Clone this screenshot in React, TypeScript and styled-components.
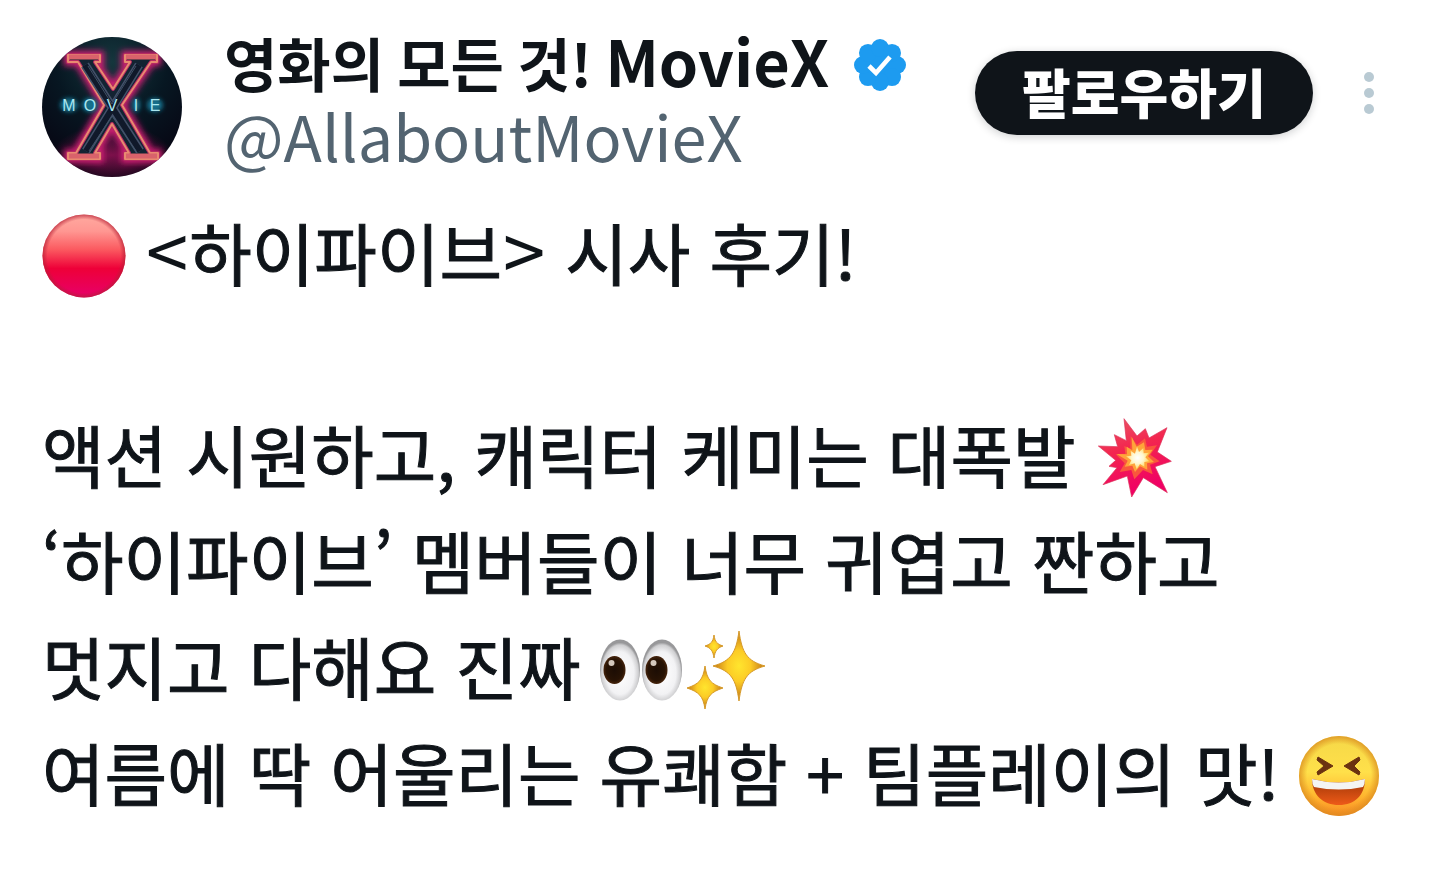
import React from "react";
import styled, { createGlobalStyle } from "styled-components";

const GlobalStyle = createGlobalStyle`
  *, *::before, *::after { box-sizing: border-box; }
  body {
    margin: 0;
    background: #ffffff;
    color: #0f1419;
    font-family: "Noto Sans CJK KR", "Noto Sans", sans-serif;
  }
`;

const Post = styled.article`
  padding: 28px 42px 40px;
`;

const Header = styled.header`
  display: flex;
  align-items: flex-start;
  padding-right: 12px;
`;

const AvatarLink = styled.a`
  display: block;
  flex: none;
  width: 140px;
  height: 140px;
  margin: 9px 42px 0 0;
  border-radius: 50%;
  overflow: hidden;

  svg { display: block; }
`;

const Names = styled.div`
  flex: 1;
  min-width: 0;
`;

const NameRow = styled.div`
  display: flex;
  align-items: center;
  gap: 25px;
  height: 68px;
`;

const Name = styled.h1`
  margin: 0;
  font-size: 58px;
  font-weight: 700;
  line-height: 68px;
  white-space: nowrap;
`;

const Latin = styled.span`
  font-size: 63px;
  line-height: 1;
`;

const Badge = styled.svg`
  flex: none;
  margin-top: 6px;
`;

const Handle = styled.a`
  display: block;
  color: #536471;
  font-size: 63px;
  line-height: 78px;
  text-decoration: none;
`;

const Actions = styled.div`
  display: flex;
  align-items: center;
  gap: 40px;
  margin-top: 23px;
`;

const FollowButton = styled.button`
  width: 338px;
  height: 84px;
  padding: 0 0 4px;
  border: 0;
  border-radius: 42px;
  background: #0f1419;
  box-shadow: 0 2px 8px rgba(15, 20, 25, 0.2);
  color: #ffffff;
  font: inherit;
  font-size: 53px;
  font-weight: 900;
  line-height: 80px;
`;

const MoreButton = styled.button`
  display: grid;
  place-items: center;
  width: 32px;
  height: 64px;
  padding: 0;
  border: 0;
  background: none;
`;

const Body = styled.div`
  margin-top: 22px;
  font-size: 68px;
  -webkit-text-stroke: 1px #0f1419;
`;

const Line = styled.p<{ $spaced?: boolean }>`
  margin: 0 0 ${(p) => (p.$spaced ? 96 : 0)}px;
  line-height: 106px;
  white-space: nowrap;
`;

const Bracket = styled.span`
  padding: 0 1px;
  font-size: 76px;
  line-height: 1;
  -webkit-text-stroke: 0;
`;

const Emoji = styled.svg`
  display: inline-block;
  vertical-align: -17px;
`;

const letters: [string, number][] = [
  ["M", 27],
  ["O", 48],
  ["V", 70],
  ["I", 94],
  ["E", 113],
];

const xShape =
  "M26 18H58V25H53L71 52L88 25H83V18H115V25H109L80 68L108 116H116V122H83V116H87L70 87L53 116H58V122H26V116H34L62 68L36 25H26Z";

function Avatar() {
  return (
    <svg width="140" height="140" viewBox="0 0 140 140" role="img" aria-label="MovieX">
      <defs>
        <radialGradient id="night" cx="50%" cy="18%" r="80%">
          <stop offset="0" stopColor="#15363d" />
          <stop offset="0.5" stopColor="#071722" />
          <stop offset="1" stopColor="#070512" />
        </radialGradient>
        <radialGradient id="floor">
          <stop offset="0" stopColor="#a3125c" stopOpacity="0.75" />
          <stop offset="1" stopColor="#a3125c" stopOpacity="0" />
        </radialGradient>
        <filter id="glow" x="-30%" y="-30%" width="160%" height="160%">
          <feGaussianBlur stdDeviation="3" />
        </filter>
        <filter id="soft" x="-30%" y="-100%" width="160%" height="300%">
          <feGaussianBlur stdDeviation="2" />
        </filter>
      </defs>
      <rect width="140" height="140" fill="url(#night)" />
      <ellipse cx="70" cy="118" rx="60" ry="30" fill="url(#floor)" />
      <path d={xShape} fill="none" stroke="#d51a76" strokeWidth="8" filter="url(#glow)" />
      <path d={xShape} fill="#132332" stroke="#b52a62" strokeWidth="4" strokeLinejoin="round" />
      <path d={xShape} fill="none" stroke="#e88a70" strokeWidth="2" strokeLinejoin="round" />
      <path d="M27 20H57M84 20H114M27 119H57M84 119H115" stroke="#d9626b" strokeWidth="5" />
      <path d="M43 28L98 114M97 28L44 114" stroke="#435069" strokeWidth="9" />
      <path d="M43 28L98 114M97 28L44 114" stroke="#10192a" strokeWidth="6" />
      <path d="M46 29L70 67L94 29M47 114L70 79L94 114" fill="none" stroke="#405266" strokeWidth="1" />
      <g fontFamily="Liberation Sans, sans-serif" fontSize="16" textAnchor="middle">
        <g fill="#12708c" filter="url(#soft)" aria-hidden="true">
          <ellipse cx="27" cy="68" rx="9" ry="7" />
          <ellipse cx="48" cy="68" rx="8" ry="7" />
          <ellipse cx="113" cy="68" rx="8" ry="7" />
          <ellipse cx="94" cy="68" rx="4" ry="7" />
        </g>
        {letters.map(([char, x]) => (
          <text key={char} x={x} y="74" fill="#a9e6f0">
            {char}
          </text>
        ))}
      </g>
    </svg>
  );
}

function VerifiedBadge() {
  const lobes = Array.from({ length: 8 }, (_, i) => {
    const a = (i * Math.PI) / 4;
    return [26 + 17 * Math.cos(a), 26 + 17 * Math.sin(a)];
  });
  return (
    <Badge width="52" height="52" viewBox="0 0 52 52" role="img" aria-label="인증된 계정">
      <g fill="#1d9bf0">
        <circle cx="26" cy="26" r="20" />
        {lobes.map(([x, y], i) => (
          <circle key={i} cx={x} cy={y} r="9" />
        ))}
      </g>
      <path d="M15 27L22 34L36 18" fill="none" stroke="#fff" strokeWidth="4.6" />
    </Badge>
  );
}

function RedCircle() {
  return (
    <Emoji width="84" height="84" viewBox="0 0 84 84" role="img" aria-label="빨간 원">
      <defs>
        <linearGradient id="red" x1="0" y1="0" x2="0" y2="1">
          <stop offset="0" stopColor="#ffaaa0" />
          <stop offset="0.2" stopColor="#ff9792" />
          <stop offset="0.42" stopColor="#fb5a60" />
          <stop offset="0.65" stopColor="#ee0038" />
          <stop offset="1" stopColor="#e7006b" />
        </linearGradient>
        <radialGradient id="redEdge">
          <stop offset="0.88" stopColor="#b51e35" stopOpacity="0" />
          <stop offset="1" stopColor="#b51e35" stopOpacity="0.7" />
        </radialGradient>
      </defs>
      <circle cx="42" cy="42" r="41.5" fill="url(#red)" />
      <circle cx="42" cy="42" r="41.5" fill="url(#redEdge)" />
    </Emoji>
  );
}

function Collision() {
  return (
    <Emoji width="84" height="84" viewBox="46 32 252 252" role="img" aria-label="폭발">
      <defs>
        <linearGradient id="burst" x1="0" y1="0" x2="0.3" y2="1">
          <stop offset="0" stopColor="#e85a67" />
          <stop offset="0.45" stopColor="#f3264f" />
          <stop offset="1" stopColor="#f00065" />
        </linearGradient>
        <radialGradient id="core">
          <stop offset="0" stopColor="#ffffff" />
          <stop offset="0.5" stopColor="#fff7cf" />
          <stop offset="1" stopColor="#ffd65c" />
        </radialGradient>
      </defs>
      <path
        d="M133 40L172 92L197 70L208 98L262 67L233 140L275 168L226 184L263 262L191 217L156 275L143 212L70 238L112 187L88 183L108 165L56 122L114 124L104 88L140 106Z"
        fill="url(#burst)"
        stroke="#dc3158"
        strokeWidth="2"
        strokeLinejoin="round"
      />
      <path
        d="M153 92L172 118L196 99L202 124L232 120L212 148L240 168L211 178L219 207L190 194L164 222L155 194L120 200L135 174L108 147L137 145L134 122L152 130Z"
        fill="#f9573d"
      />
      <path
        d="M156 94L171 124L193 111L197 134L219 133L205 153L223 170L202 174L203 193L181 183L166 200L158 181L135 184L144 166L111 146L142 147L141 124L158 135Z"
        fill="#ffa43a"
      />
      <path
        d="M172 123L178 140L191 128L192 144L208 142L197 156L209 168L194 170L194 184L181 176L171 192L165 174L148 179L155 165L139 153L155 151L153 136L166 145Z"
        fill="url(#core)"
      />
    </Emoji>
  );
}

function Eyes() {
  return (
    <Emoji width="84" height="84" viewBox="0 0 84 84" role="img" aria-label="눈">
      <defs>
        <radialGradient id="eyeWhite" cx="50%" cy="55%">
          <stop offset="0" stopColor="#ffffff" />
          <stop offset="0.7" stopColor="#f2f2f4" />
          <stop offset="0.92" stopColor="#cfcfd1" />
          <stop offset="1" stopColor="#98989a" />
        </radialGradient>
        <radialGradient id="iris">
          <stop offset="0" stopColor="#1c0d04" />
          <stop offset="0.75" stopColor="#281304" />
          <stop offset="1" stopColor="#46240c" />
        </radialGradient>
      </defs>
      {[0, 42].map((x) => (
        <g key={x} transform={`translate(${x} 0)`}>
          <ellipse cx="20" cy="42" rx="20" ry="30.5" fill="url(#eyeWhite)" />
          <ellipse cx="14.5" cy="42" rx="11" ry="14" fill="url(#iris)" />
          <circle cx="11.5" cy="35" r="3" fill="#d4c8bd" />
        </g>
      ))}
    </Emoji>
  );
}

function Sparkles() {
  return (
    <Emoji width="84" height="84" viewBox="0 0 84 84" role="img" aria-label="반짝임">
      <defs>
        <radialGradient id="gold">
          <stop offset="0" stopColor="#ffe52e" />
          <stop offset="0.45" stopColor="#fccb25" />
          <stop offset="1" stopColor="#c17416" />
        </radialGradient>
      </defs>
      <g fill="url(#gold)" stroke="#d69a2a" strokeWidth="1" strokeLinejoin="round">
        <path d="M55 3C58 25 63 33 81 38C63 43 58 51 55 73C52 51 47 43 29 38C47 33 52 25 55 3Z" />
        <path d="M21 38C23 52 27 56 39 60C27 64 23 68 21 81C19 68 15 64 3 60C15 56 19 52 21 38Z" />
        <path d="M30 7C31 14 33 16 39 18C33 20 31 23 30 30C29 23 27 20 21 18C27 16 29 14 30 7Z" />
      </g>
    </Emoji>
  );
}

function Laughing() {
  return (
    <Emoji width="84" height="84" viewBox="0 0 84 84" role="img" aria-label="웃는 얼굴">
      <defs>
        <linearGradient id="face" x1="0" y1="0" x2="0" y2="1">
          <stop offset="0" stopColor="#f5d848" />
          <stop offset="0.45" stopColor="#ffe04a" />
          <stop offset="0.75" stopColor="#ffb62f" />
          <stop offset="1" stopColor="#f98b24" />
        </linearGradient>
        <radialGradient id="faceEdge">
          <stop offset="0.8" stopColor="#dc8a1b" stopOpacity="0" />
          <stop offset="1" stopColor="#d98a20" stopOpacity="0.75" />
        </radialGradient>
        <linearGradient id="mouth" x1="0" y1="0" x2="0" y2="1">
          <stop offset="0" stopColor="#9e3607" />
          <stop offset="1" stopColor="#ee5a18" />
        </linearGradient>
      </defs>
      <circle cx="40" cy="42" r="40" fill="url(#face)" />
      <circle cx="40" cy="42" r="40" fill="url(#faceEdge)" />
      <path d="M19 23L34 32L19 41L18 38L25 32L18 26ZM60 23L45 32L60 41L61 38L55 32L61 26Z" fill="#6b3210" stroke="#6b3210" strokeLinejoin="round" />
      <path d="M13 45Q40 52 66 45C66 61 56 71 40 71S13 61 13 45Z" fill="url(#mouth)" />
      <path d="M13 45Q40 52 66 45Q66 50 64 53Q40 58 15 53Q13 50 13 45Z" fill="#f4f4f2" />
    </Emoji>
  );
}

export default function App() {
  return (
    <>
      <GlobalStyle />
      <Post>
        <Header>
          <AvatarLink href="#profile">
            <Avatar />
          </AvatarLink>
          <Names>
            <NameRow>
              <Name>
                영화의 모든 것! <Latin>MovieX</Latin>
              </Name>
              <VerifiedBadge />
            </NameRow>
            <Handle href="#profile">@AllaboutMovieX</Handle>
          </Names>
          <Actions>
            <FollowButton type="button">팔로우하기</FollowButton>
            <MoreButton type="button" aria-label="더 보기">
              <svg width="12" height="44" viewBox="0 0 12 44" fill="#b9cad3">
                <circle cx="6" cy="6" r="5" />
                <circle cx="6" cy="22" r="5" />
                <circle cx="6" cy="38" r="5" />
              </svg>
            </MoreButton>
          </Actions>
        </Header>
        <Body lang="ko">
          <Line $spaced>
            <RedCircle /> <Bracket>&lt;</Bracket>하이파이브<Bracket>&gt;</Bracket> 시사 후기!
          </Line>
          <Line>
            액션 시원하고, 캐릭터 케미는 대폭발 <Collision />
          </Line>
          <Line>‘하이파이브’ 멤버들이 너무 귀엽고 짠하고</Line>
          <Line>
            멋지고 다해요 진짜 <Eyes />
            <Sparkles />
          </Line>
          <Line>
            여름에 딱 어울리는 유쾌함 + 팀플레이의 맛! <Laughing />
          </Line>
        </Body>
      </Post>
    </>
  );
}
